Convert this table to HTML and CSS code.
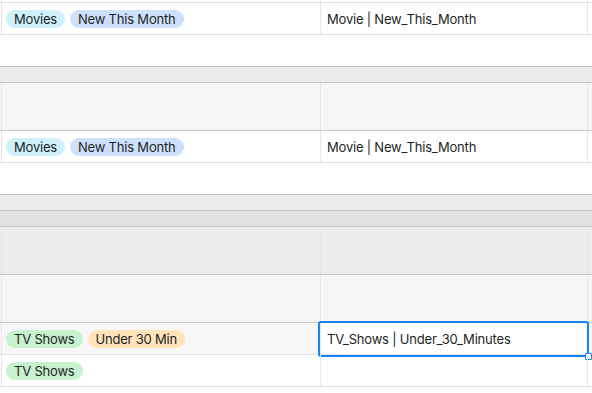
FILE: index.html
```html
<!DOCTYPE html>
<html>
<head>
<meta charset="utf-8">
<link rel="stylesheet" href="styles.css">
</head>
<body>
<div class="grid">
  <div class="row top"><div class="cell c1"></div><div class="cell c2"></div><div class="cell c3"></div></div>
  <div class="row data">
    <div class="cell c1"><span class="pill cyan">Movies</span><span class="pill blue">New This Month</span></div>
    <div class="cell c2">Movie | New_This_Month</div>
    <div class="cell c3"></div>
  </div>
  <div class="row blank"></div>
  <div class="band light"></div>
  <div class="row tall grey">
    <div class="cell c1"></div><div class="cell c2"></div><div class="cell c3"></div>
  </div>
  <div class="row data">
    <div class="cell c1"><span class="pill cyan">Movies</span><span class="pill blue">New This Month</span></div>
    <div class="cell c2">Movie | New_This_Month</div>
    <div class="cell c3"></div>
  </div>
  <div class="row blank"></div>
  <div class="band light first"></div>
  <div class="band dark"></div>
  <div class="row tall mid">
    <div class="cell c1"></div><div class="cell c2"></div><div class="cell c3"></div>
  </div>
  <div class="row tall grey">
    <div class="cell c1"></div><div class="cell c2"></div><div class="cell c3"></div>
  </div>
  <div class="row data hover">
    <div class="cell c1"><span class="pill green">TV Shows</span><span class="pill orange">Under 30 Min</span></div>
    <div class="cell c2 selected">TV_Shows | Under_30_Minutes<span class="sel"><span class="handle"></span></span></div>
    <div class="cell c3"></div>
  </div>
  <div class="row data">
    <div class="cell c1"><span class="pill green">TV Shows</span></div>
    <div class="cell c2"></div>
    <div class="cell c3"></div>
  </div>
</div>
</body>
</html>
```
FILE: styles.css
```css
* { box-sizing: border-box; }
html, body { margin: 0; padding: 0; background: #fff; }
body {
  font-family: Inter, "Helvetica Neue", "Liberation Sans", sans-serif;
  font-size: 13px;
  letter-spacing: -0.2px;
  color: #1d1f24;
  overflow: hidden;
  width: 592px;
  height: 393px;
}
.grid { display: flex; flex-direction: column; width: 592px; overflow: hidden; }
.row {
  display: flex;
  flex: none;
  height: 32px;
  border-bottom: 1px solid #dfe2e3;
  padding-left: 1px;
}
.row.top { height: 3px; }
.row.tall { height: 48px; border-bottom-color: #c9c9c9; }
.row.grey { background: #f5f5f5; }
.row.mid { background: #ececec; }
.row.hover { background: #f7f7f7; }
.row.blank { border-bottom-color: #c9c9c9; }
.band { flex: none; height: 16px; border-bottom: 1px solid #c6c6c6; }
.band.light { background: #ececec; }
.band.dark { background: #e1e1e1; }
.cell {
  flex: none;
  height: 100%;
  border-right: 1px solid #e6e6e6;
  display: flex;
  align-items: center;
  position: relative;
}
.cell.c1 { width: 320px; border-left: 1px solid #e6e6e6; padding-left: 4px; gap: 5px; }
.cell.c2 { width: 267px; padding-left: 6px; }
.cell.c3 { width: 100px; }
.pill {
  display: inline-flex;
  align-items: center;
  height: 18px;
  padding: 0 8px;
  border-radius: 9px;
  line-height: 18px;
  white-space: nowrap;
}
.pill.cyan { background: #cdf0fb; }
.pill.blue { background: #cfe0fc; }
.pill.green { background: #c8f1cf; }
.pill.orange { background: #ffe3b9; }
.selected { background: #fff; }
.sel {
  position: absolute;
  left: -3px; right: -2px; top: -2px; bottom: -3px;
  border: 2px solid #1683f5;
  border-radius: 3px;
}
.handle {
  position: absolute;
  right: -5px; bottom: -5px;
  width: 7px; height: 7px;
  background: #fff;
  border: 1.5px solid #1683f5;
  border-radius: 1px;
}
```
